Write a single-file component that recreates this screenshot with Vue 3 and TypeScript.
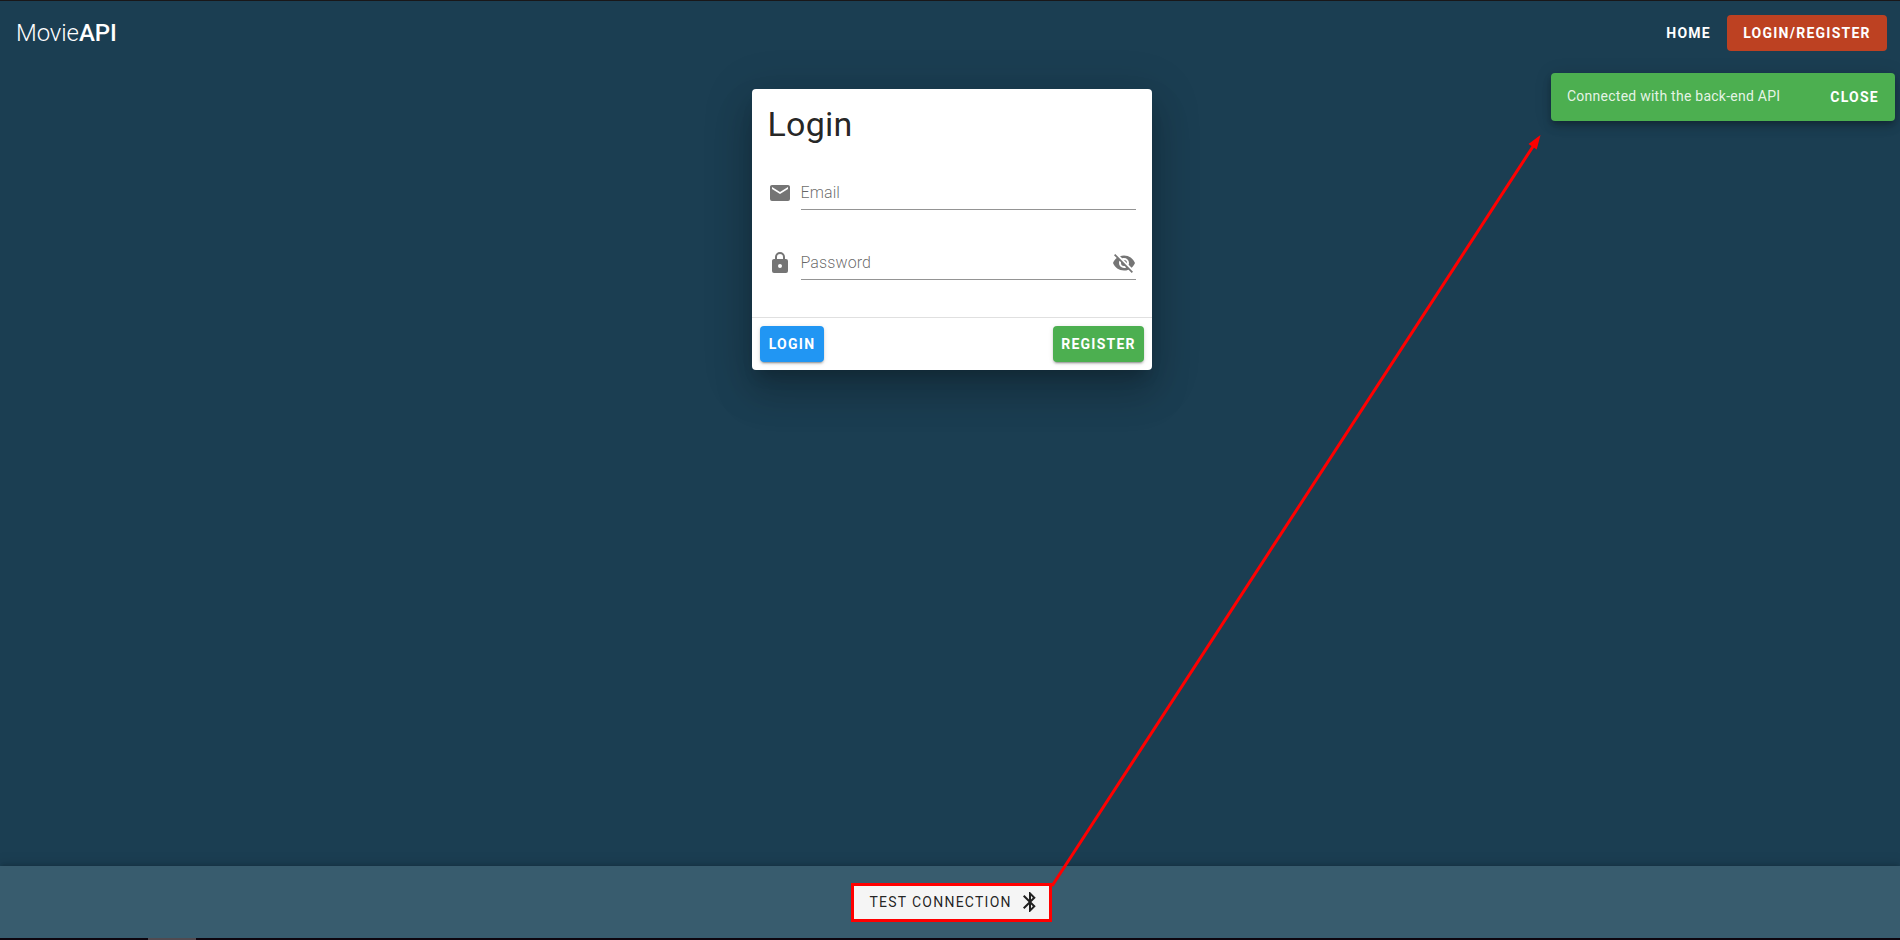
<script setup lang="ts">
import { ref } from 'vue'

interface Field {
  id: string
  label: string
  type: string
  icon: string
}

const eyeOff =
  'M11.83,9L15,12.16C15,12.11 15,12.05 15,12A3,3 0 0,0 12,9C11.94,9 11.89,9 11.83,9M7.53,9.8L9.08,11.35C9.03,11.56 9,11.77 9,12A3,3 0 0,0 12,15C12.22,15 12.44,14.97 12.65,14.92L14.2,16.47C13.53,16.8 12.79,17 12,17A5,5 0 0,1 7,12C7,11.21 7.2,10.47 7.53,9.8M2,4.27L4.28,6.55L4.73,7C3.08,8.3 1.78,10 1,12C2.73,16.39 7,19.5 12,19.5C13.55,19.5 15.03,19.2 16.38,18.66L16.81,19.08L19.73,22L21,20.73L3.27,3M12,7A5,5 0 0,1 17,12C17,12.64 16.87,13.26 16.64,13.82L19.57,16.75C21.07,15.5 22.27,13.86 23,12C21.27,7.61 17,4.5 12,4.5C10.6,4.5 9.26,4.75 8,5.2L10.17,7.35C10.74,7.13 11.35,7 12,7Z'
const bluetooth =
  'M14.88,16.29L13,18.17V14.41M13,5.83L14.88,7.71L13,9.58M17.71,7.71L12,2H11V9.58L6.41,5L5,6.41L10.59,12L5,17.58L6.41,19L11,14.41V22H12L17.71,16.29L13.41,12L17.71,7.71Z'

const fields: Field[] = [
  {
    id: 'email',
    label: 'Email',
    type: 'email',
    icon: 'M20,8L12,13L4,8V6L12,11L20,6M20,4H4C2.89,4 2,4.89 2,6V18A2,2 0 0,0 4,20H20A2,2 0 0,0 22,18V6C22,4.89 21.1,4 20,4Z',
  },
  {
    id: 'password',
    label: 'Password',
    type: 'password',
    icon: 'M12,17A2,2 0 0,0 14,15C14,13.89 13.1,13 12,13A2,2 0 0,0 10,15A2,2 0 0,0 12,17M18,8A2,2 0 0,1 20,10V20A2,2 0 0,1 18,22H6A2,2 0 0,1 4,20V10C4,8.89 4.9,8 6,8H7V6A5,5 0 0,1 12,1A5,5 0 0,1 17,6V8H18M12,3A3,3 0 0,0 9,6V8H15V6A3,3 0 0,0 12,3Z',
  },
]

const values = ref<Record<string, string>>({ email: '', password: '' })
const showPassword = ref(false)
const snackbar = ref(true)
</script>

<template>
  <div class="page">
    <header class="app-bar">
      <div class="brand">Movie<span class="brand-strong">API</span></div>
      <nav class="nav">
        <button class="btn btn-text">Home</button>
        <button class="btn btn-account">Login/Register</button>
      </nav>
    </header>

    <main class="content">
      <form class="card" @submit.prevent>
        <h1 class="card-title">Login</h1>
        <div class="fields">
          <div v-for="field in fields" :key="field.id" class="field">
            <svg class="icon" viewBox="0 0 24 24"><path :d="field.icon" /></svg>
            <div class="control">
              <input
                v-model="values[field.id]"
                class="input"
                :type="field.type === 'password' && showPassword ? 'text' : field.type"
                :placeholder="field.label"
              />
              <svg
                v-if="field.type === 'password'"
                class="icon toggle"
                viewBox="0 0 24 24"
                @click="showPassword = !showPassword"
              >
                <path :d="eyeOff" />
              </svg>
            </div>
          </div>
        </div>
        <div class="actions">
          <button class="btn raised btn-blue">Login</button>
          <button class="btn raised btn-green" type="button">Register</button>
        </div>
      </form>
    </main>

    <footer class="footer">
      <button class="btn-test" @click="snackbar = true">
        <span>Test connection</span>
        <svg class="icon-bt" viewBox="0 0 24 24"><path :d="bluetooth" /></svg>
      </button>
    </footer>
    <div class="taskbar"><div class="taskbar-item"></div></div>

    <div v-if="snackbar" class="snackbar">
      <span class="snackbar-text">Connected with the back-end API</span>
      <button class="btn btn-close" @click="snackbar = false">Close</button>
    </div>

    <svg class="arrow" viewBox="0 0 1900 940">
      <line x1="1052" y1="886" x2="1534" y2="145" />
      <polygon points="1540.5,135 1528.5,144 1536.7,149.5" />
    </svg>
  </div>
</template>

<style>
body {
  margin: 0;
}
</style>

<style scoped>
.page {
  position: relative;
  box-sizing: border-box;
  display: flex;
  flex-direction: column;
  width: 100%;
  height: 940px;
  overflow: hidden;
  border-top: 1px solid #191719;
  background: #1b3e52;
  font-family: Roboto, sans-serif;
  color: rgba(0, 0, 0, 0.87);
}
.app-bar {
  display: flex;
  align-items: center;
  justify-content: space-between;
  box-sizing: border-box;
  height: 64px;
  padding: 0 13px 0 16px;
}
.brand {
  font-size: 24px;
  font-weight: 300;
  line-height: 32px;
  letter-spacing: -0.1px;
  color: #fff;
}
.brand-strong {
  font-weight: 500;
}
.nav {
  display: flex;
}
.btn {
  height: 36px;
  border: 0;
  border-radius: 4px;
  background: none;
  color: #fff;
  font: 700 14px/36px Roboto, sans-serif;
  letter-spacing: 1.25px;
  text-transform: uppercase;
  white-space: nowrap;
  cursor: pointer;
}
.btn-text {
  padding: 0 16px;
}
.btn-account {
  width: 160px;
  padding: 0;
  background: #bd4122;
}
.content {
  flex: 1;
  display: flex;
  justify-content: center;
  align-items: flex-start;
  padding: 24px 0 0 4px;
}
.card {
  width: 400px;
  border-radius: 4px;
  background: #fff;
  box-shadow:
    0 11px 15px -7px rgba(0, 0, 0, 0.2),
    0 24px 38px 3px rgba(0, 0, 0, 0.14),
    0 9px 46px 8px rgba(0, 0, 0, 0.12);
}
.card-title {
  margin: 0;
  padding: 15px 16px 1px 15.5px;
  font-size: 34px;
  font-weight: 400;
  line-height: 40px;
  letter-spacing: 0.25px;
}
.fields {
  display: flex;
  flex-direction: column;
  gap: 37px;
  padding: 32px 16px 37px 15.5px;
}
.field {
  display: flex;
  gap: 9.5px;
  height: 33px;
}
.icon {
  flex: none;
  width: 24px;
  height: 24px;
  margin-top: 4px;
  fill: #757575;
}
.control {
  flex: 1;
  display: flex;
  box-sizing: border-box;
  border-bottom: 1px solid #949494;
}
.input {
  flex: 1;
  min-width: 0;
  height: 30px;
  margin-left: -0.5px;
  padding: 0;
  border: 0;
  outline: none;
  background: none;
  font: 400 16px/20px Roboto, sans-serif;
}
.input::placeholder {
  color: rgba(0, 0, 0, 0.6);
  font-weight: 300;
  letter-spacing: 0.1px;
  opacity: 1;
}
.toggle {
  cursor: pointer;
}
.actions {
  display: flex;
  justify-content: space-between;
  padding: 8px;
  border-top: 1px solid #e0e0e0;
}
.raised {
  box-shadow:
    0 3px 1px -2px rgba(0, 0, 0, 0.2),
    0 2px 2px 0 rgba(0, 0, 0, 0.14),
    0 1px 5px 0 rgba(0, 0, 0, 0.12);
}
.btn-blue {
  width: 64px;
  padding: 0;
  background: #2196f3;
}
.btn-green {
  width: 91px;
  padding: 0;
  background: #4caf50;
}
.footer {
  display: flex;
  justify-content: center;
  align-items: center;
  box-sizing: border-box;
  height: 72px;
  padding: 0 0 0 3px;
  background: #385c6e;
  box-shadow:
    0 -3px 3px -2px rgba(0, 0, 0, 0.12),
    0 0 12px 3px rgba(0, 0, 0, 0.1);
}
.btn-test {
  display: flex;
  align-items: center;
  justify-content: space-between;
  box-sizing: border-box;
  width: 201px;
  height: 39px;
  padding: 0 7px 0 15.5px;
  border: 3px solid #f00;
  background: #f5f5f5;
  color: rgba(0, 0, 0, 0.87);
  font: 400 14px/33px Roboto, sans-serif;
  letter-spacing: 1.25px;
  text-transform: uppercase;
  white-space: nowrap;
  cursor: pointer;
}
.icon-bt {
  width: 24px;
  height: 24px;
  fill: rgba(0, 0, 0, 0.87);
}
.taskbar {
  height: 2px;
  padding-left: 148px;
  background: #0d060f;
}
.taskbar-item {
  width: 48px;
  height: 2px;
  background: #504a50;
}
.snackbar {
  position: absolute;
  top: 72px;
  right: 5px;
  display: flex;
  align-items: center;
  justify-content: space-between;
  box-sizing: border-box;
  width: 344px;
  height: 48px;
  padding: 0 8px 0 16px;
  border-radius: 4px;
  background: #4caf50;
  box-shadow:
    0 3px 5px -1px rgba(0, 0, 0, 0.2),
    0 6px 10px 0 rgba(0, 0, 0, 0.14),
    0 1px 18px 0 rgba(0, 0, 0, 0.12);
}
.snackbar-text {
  padding-bottom: 2px;
  color: rgba(255, 255, 255, 0.87);
  font-size: 14px;
  line-height: 20px;
  letter-spacing: 0.25px;
}
.btn-close {
  padding: 0 8px;
}
.arrow {
  position: absolute;
  top: -1px;
  left: 0;
  width: 1900px;
  height: 940px;
  pointer-events: none;
}
.arrow line {
  stroke: #f00;
  stroke-width: 3;
}
.arrow polygon {
  fill: #f00;
}
</style>
